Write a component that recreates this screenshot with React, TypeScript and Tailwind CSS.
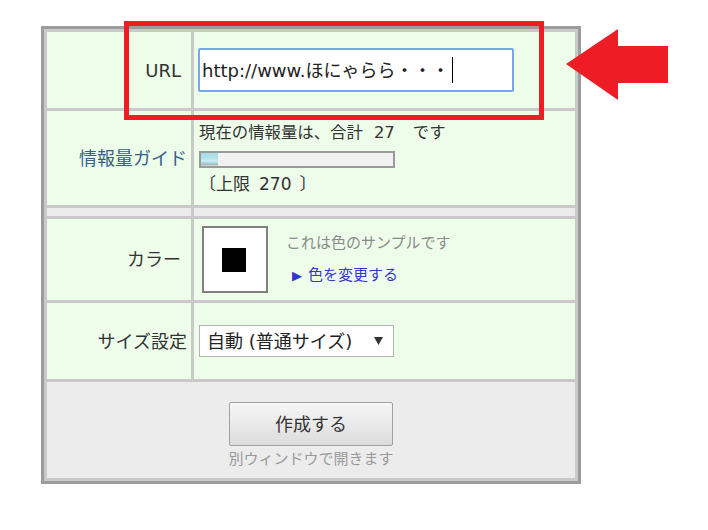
import React from 'react';

const FONT = "font-['DejaVu_Sans','Noto_Sans_CJK_JP',sans-serif]";

function LabelCell({ children, className = '' }: { children: React.ReactNode; className?: string }) {
  return (
    <div className={`flex items-center justify-end bg-[#edfdea] pr-[4px] text-[18px] ${className}`}>
      {children}
    </div>
  );
}

function ValueCell({ children, className = '' }: { children: React.ReactNode; className?: string }) {
  return <div className={`flex items-center bg-[#edfdea] ${className}`}>{children}</div>;
}

export default function App() {
  const current = 27;
  const limit = 270;
  const ratio = current / limit;

  return (
    <div className={`relative h-[530px] w-[708px] bg-white pl-[41px] pt-[26px] text-[#333] ${FONT}`}>
      <div className="w-[540px] border-[3px] border-[#9c9c9c] bg-[#c9c9c9] p-[3px]">
        <div className="grid grid-cols-[144px_381px] grid-rows-[76px_94px_8px_81px_76px_96px] gap-[3px]">
          {/* URL */}
          <LabelCell>
            <span className="mr-[6px]">URL</span>
          </LabelCell>
          <ValueCell className="pl-[4px]">
            <div className="flex h-[44px] w-[316px] items-center rounded-[2px] border-[2px] border-[#78a6ea] bg-white pl-[2px] text-[18px] text-[#222]">
              <span className="whitespace-nowrap">http://www.ほにゃらら・・・</span>
              <span className="ml-[3px] h-[26px] w-[1px] bg-black" />
            </div>
          </ValueCell>

          {/* 情報量ガイド */}
          <LabelCell className="text-[#35608a]">情報量ガイド</LabelCell>
          <ValueCell className="pl-[5px]">
            <div className="flex flex-col">
              <div className="text-[16.4px] leading-[24px] whitespace-nowrap">
                現在の情報量は、合計<span className="ml-[11px] mr-[18px]">{current}</span>です
              </div>
              <div className="mt-[6px] h-[17px] w-[196px] border-[2px] border-[#9a9a9a] bg-[#f1f1f1]">
                <div
                  className="h-full bg-[linear-gradient(to_bottom,#a6dbe4_0%,#b7e3ea_45%,#cdeef2_60%,#9fd3dd_80%,#b0b0b0_90%,#e8e8e8_100%)]"
                  style={{ width: `${Math.round(ratio * 172)}px` }}
                />
              </div>
              <div className="mt-[4px] text-[17px] leading-[24px] whitespace-nowrap">
                〔上限<span className="ml-[9px] mr-[8px]">{limit}</span>〕
              </div>
            </div>
          </ValueCell>

          {/* spacer row */}
          <div className="bg-[#ececec]" />
          <div className="bg-[#ececec]" />

          {/* カラー */}
          <LabelCell>
            <span className="mr-[6px]">カラー</span>
          </LabelCell>
          <ValueCell className="pl-[8px]">
            <div className="flex h-[67px] w-[66px] items-center justify-center border-[2px] border-[#808080] bg-white">
              <div className="mr-[3px] h-[24px] w-[24px] bg-black" />
            </div>
            <div className="ml-[18px] flex flex-col text-[15px] leading-[32px]">
              <span className="text-[#8a8a8a]">これは色のサンプルです</span>
              <span className="pl-[6px] text-[#3535d0]">
                <span className="mr-[6px] text-[13px]">▶</span>色を変更する
              </span>
            </div>
          </ValueCell>

          {/* サイズ設定 */}
          <LabelCell>サイズ設定</LabelCell>
          <ValueCell className="pl-[5px]">
            <div className="flex h-[32px] w-[195px] items-center justify-between border border-[#b4b4b4] bg-white pl-[7px] pr-[10px] text-[18px] text-[#222]">
              <span className="whitespace-nowrap">自動 (普通サイズ)</span>
              <svg width="9" height="8" viewBox="0 0 9 8">
                <polygon points="0,0 9,0 4.5,8" fill="#333" />
              </svg>
            </div>
          </ValueCell>

          {/* button area */}
          <div className="col-span-2 flex flex-col items-center bg-[#ececec] pt-[20px]">
            <button className="h-[44px] w-[164px] rounded-[2px] border border-[#a2a2a2] bg-[linear-gradient(to_bottom,#f7f7f7,#dcdcdc)] text-[18px] text-[#333]">
              作成する
            </button>
            <span className="mt-[1px] text-[15px] leading-[24px] text-[#9a9a9a]">別ウィンドウで開きます</span>
          </div>
        </div>
      </div>

      {/* annotation: red box */}
      <div className="pointer-events-none absolute left-[124px] top-[21px] h-[99px] w-[420px] border-[5px] border-[#ee1d25]" />

      {/* annotation: arrow */}
      <svg
        className="pointer-events-none absolute left-[560px] top-[24px]"
        width="112"
        height="82"
        viewBox="0 0 112 82"
      >
        <polygon points="6,40 58,5 58,22 108,22 108,59 58,59 58,76" fill="#ee1d25" />
      </svg>
    </div>
  );
}
